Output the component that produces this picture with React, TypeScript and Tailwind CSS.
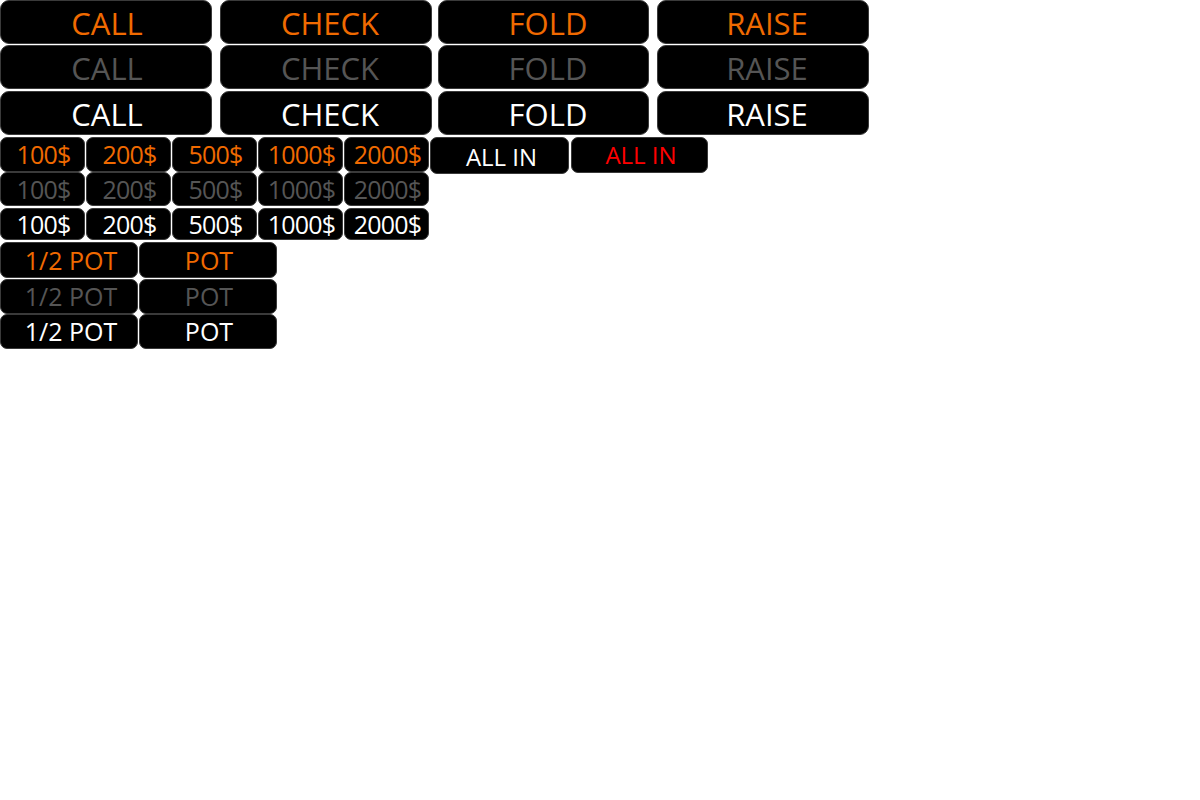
const ORANGE = "text-[#f06a00]";
const GRAY = "text-[#555555]";
const WHITE = "text-white";

const tones = [ORANGE, GRAY, WHITE];
const actionRowClass = ["h-[44px]", "h-[44px] mt-[1px]", "h-[44px] mt-[2px]"];

const actions = [
  { label: "CALL", w: "w-[212px]", ml: "ml-0", pad: "pl-[2px]" },
  { label: "CHECK", w: "w-[212px]", ml: "ml-[8px]", pad: "pl-[8px]" },
  { label: "FOLD", w: "w-[211px]", ml: "ml-[6px]", pad: "pl-[9px]" },
  { label: "RAISE", w: "w-[212px]", ml: "ml-[8px]", pad: "pl-[8px]" },
];

const chips = ["100$", "200$", "500$", "1000$", "2000$"];
const potRowClass = ["h-[36px]", "h-[35px] mt-[1px]", "h-[35px]"];

function Btn({
  label,
  className,
  tone,
}: {
  label: string;
  className: string;
  tone: string;
}) {
  return (
    <div
      className={`flex items-center justify-center bg-black border border-[#3a3a3a] leading-none whitespace-nowrap ${tone} ${className}`}
    >
      {label}
    </div>
  );
}

export default function App() {
  return (
    <div className="w-[1200px] h-[800px] bg-white font-['Open_Sans',sans-serif] flex flex-col">
      {/* action buttons */}
      <div className="flex flex-col">
        {tones.map((tone, r) => (
          <div key={r} className={`flex ${actionRowClass[r]}`}>
            {actions.map((a) => (
              <Btn
                key={a.label}
                label={a.label}
                tone={tone}
                className={`${a.w} ${a.ml} ${a.pad} h-full rounded-[9px] text-[31px] pt-[2px]`}
              />
            ))}
          </div>
        ))}
      </div>

      {/* chip buttons */}
      <div className="flex flex-col mt-[2px]">
        <div className="flex h-[35px] items-start">
          {chips.map((c, i) => (
            <Btn
              key={c}
              label={c}
              tone={ORANGE}
              className={`w-[85px] h-[35px] ${i > 0 ? "ml-[1px]" : ""} rounded-[7px] text-[25px] tracking-[-0.8px] pl-[2px]`}
            />
          ))}
          <Btn
            label="ALL IN"
            tone={WHITE}
            className="w-[139px] h-[37px] ml-[1px] rounded-[7px] text-[24px] pt-[2px] pl-[4px]"
          />
          <Btn
            label="ALL IN"
            tone="text-[#ff0000]"
            className="w-[137px] h-[36px] ml-[2px] rounded-[7px] text-[24px] pl-[3px]"
          />
        </div>
        <div className="flex h-[34px]">
          {chips.map((c, i) => (
            <Btn
              key={c}
              label={c}
              tone={GRAY}
              className={`w-[85px] h-full ${i > 0 ? "ml-[1px]" : ""} rounded-[7px] text-[25px] tracking-[-0.8px] pl-[2px]`}
            />
          ))}
        </div>
        <div className="flex h-[32px] mt-[2px]">
          {chips.map((c, i) => (
            <Btn
              key={c}
              label={c}
              tone={WHITE}
              className={`w-[85px] h-full ${i > 0 ? "ml-[1px]" : ""} rounded-[7px] text-[25px] tracking-[-0.8px] pl-[2px]`}
            />
          ))}
        </div>
      </div>

      {/* pot buttons */}
      <div className="flex flex-col mt-[2px]">
        {tones.map((tone, r) => (
          <div key={r} className={`flex ${potRowClass[r]}`}>
            <Btn
              label="1/2 POT"
              tone={tone}
              className="w-[138px] h-full rounded-[7px] text-[25px] pl-[4px]"
            />
            <Btn
              label="POT"
              tone={tone}
              className="w-[138px] h-full ml-[1px] rounded-[7px] text-[25px] pl-[2px]"
            />
          </div>
        ))}
      </div>
    </div>
  );
}
